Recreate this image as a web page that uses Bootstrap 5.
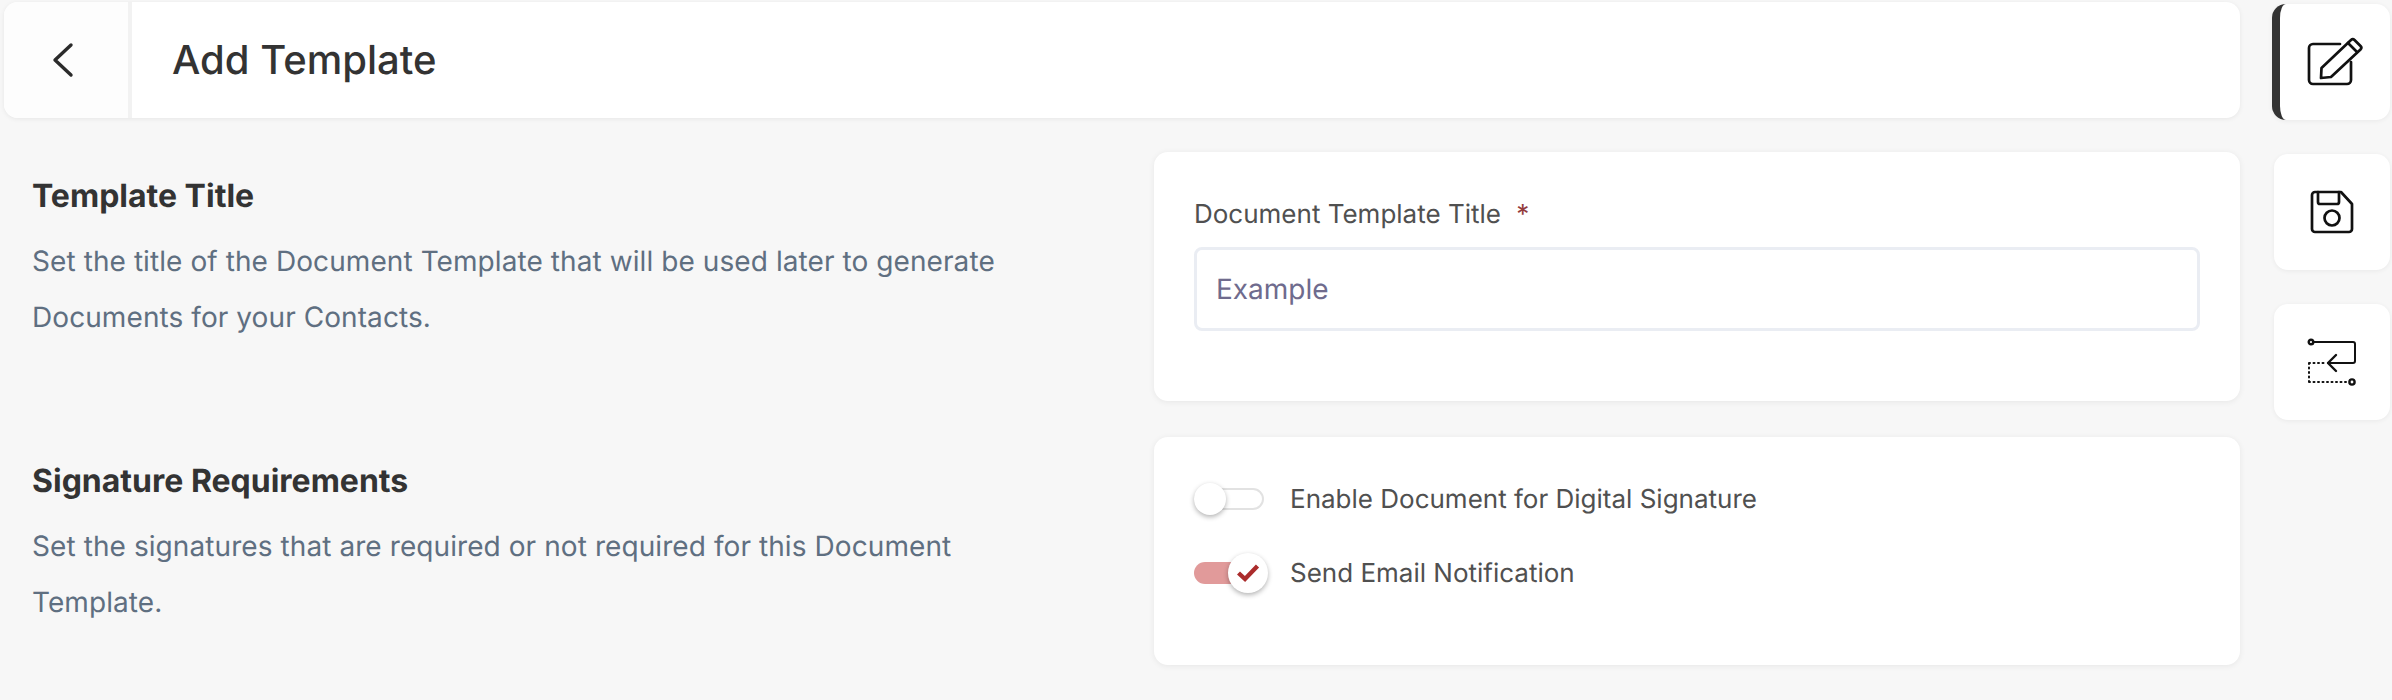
<!doctype html>
<html lang="en">
<head>
<meta charset="utf-8">
<title>Add Template</title>
<link href="https://cdn.jsdelivr.net/npm/bootstrap@5.3.0/dist/css/bootstrap.min.css" rel="stylesheet">
<style>
html,body{height:700px;overflow:hidden}
body{background:#f7f7f7;font-family:Inter,"Liberation Sans",sans-serif;color:#333;text-rendering:geometricPrecision}
.shell{padding:2px 2px 0 4px;gap:34px}
.main-area{width:2236px}
.top-bar{height:116px;background:#fff;border-radius:14px;box-shadow:0 1px 5px rgba(0,0,0,.07);overflow:hidden}
.back-cell{width:124px;background:#fdfdfd;padding-right:7px}
.top-div{width:4px;background:#f2f2f2}
.page-title{font-size:40px;font-weight:500;color:#333;margin:0 0 0 40px;line-height:48px}
.sect{display:grid;grid-template-columns:1150px 1086px}
.sect-one{margin-top:34px;height:249px}
.sect-two{margin-top:36px;height:228px}
.sect-text{padding-left:28px}
.sect-head{font-size:32px;font-weight:700;color:#333;line-height:40px;margin:24px 0 0}
.sect-desc{font-size:28px;letter-spacing:.08px;line-height:56px;color:#5f6f81;margin:17px 0 0;width:1020px}
.panel{background:#fff;border-radius:14px;box-shadow:0 1px 6px rgba(0,0,0,.07);padding:0 40px}
.fld-label{font-size:26px;line-height:30px;color:#505050;margin:48px 0 17px;display:block}
.req{color:#943c3c;margin-left:8px}
.fld-input.form-control{height:84px;border:3px solid #eaedf3;border-radius:8px;font-size:28px;padding:0 19px;color:#6f6b8d;background:#fff;box-shadow:none;text-rendering:geometricPrecision}
.fld-input::placeholder{color:#6f6b8d;opacity:1}
.tog-row{height:74px;gap:26px;font-size:26px;color:#505050}
.tog-first{margin-top:25px}
.tog{position:relative;display:block;width:70px;height:22px;border-radius:11px;flex:none}
.tog-off{border:2px solid #e2e2e2;background:#fff}
.tog-on{background:#e19a9a}
.knob{position:absolute;background:#fff;border-radius:50%;box-shadow:0 2px 5px rgba(0,0,0,.3);display:flex;align-items:center;justify-content:center}
.tog-off .knob{width:32px;height:32px;left:-2px;top:-7px}
.tog-on .knob{width:40px;height:40px;left:34px;top:-9px}
.rail{gap:34px;width:116px}
.rail-btn{width:116px;height:116px;background:#fff;border:0;padding:0;border-radius:14px;box-shadow:0 1px 5px rgba(0,0,0,.06);display:flex;align-items:center;justify-content:center}
.rail-btn:first-child{margin-top:2px}
.rail-active{width:118px;margin-left:-2px;border-left:8px solid #333}
svg{overflow:visible}
</style>
</head>
<body>
<div class="shell d-flex align-items-start">
  <div class="main-area">
    <header class="top-bar d-flex align-items-stretch">
      <div class="back-cell d-flex align-items-center justify-content-center">
        <svg width="20" height="34" viewBox="0 0 20 34" fill="none" stroke="#2b2b2b" stroke-width="3.400" stroke-linecap="round" stroke-linejoin="round"><path d="M18 2 2 17l16 15"/></svg>
      </div>
      <div class="top-div"></div>
      <div class="d-flex align-items-center"><h1 class="page-title">Add Template</h1></div>
    </header>
    <section class="sect sect-one">
      <div class="sect-text">
        <h2 class="sect-head">Template Title</h2>
        <p class="sect-desc">Set the title of the Document Template that will be used later to generate Documents for your Contacts.</p>
      </div>
      <div class="panel">
        <label class="fld-label" for="tpl-title">Document Template Title <span class="req">*</span></label>
        <input id="tpl-title" class="form-control fld-input" type="text" placeholder="Example">
      </div>
    </section>
    <section class="sect sect-two">
      <div class="sect-text">
        <h2 class="sect-head">Signature Requirements</h2>
        <p class="sect-desc">Set the signatures that are required or not required for this Document Template.</p>
      </div>
      <div class="panel">
        <div class="tog-row tog-first d-flex align-items-center"><span class="tog tog-off"><span class="knob"></span></span><span>Enable Document for Digital Signature</span></div>
        <div class="tog-row d-flex align-items-center"><span class="tog tog-on"><span class="knob"><svg width="22" height="18" viewBox="0 0 22 18" fill="none" stroke="#ab2c2c" stroke-width="4.400"><path d="M1.500 9 8 15 20.500 2"/></svg></span></span><span>Send Email Notification</span></div>
      </div>
    </section>
  </div>
  <nav class="rail d-flex flex-column">
    <button class="rail-btn rail-active" aria-label="Edit">
      <svg width="54" height="48" viewBox="0 0 54 48" fill="none" stroke="#111" stroke-width="2.700" stroke-linecap="round" stroke-linejoin="round"><path d="M32 6H5a4 4 0 0 0-4 4v32a4 4 0 0 0 4 4h34a4 4 0 0 0 4-4V24"/><path d="M13 40l.5-10L43 2a2.500 2.500 0 0 1 3.500 0L52.500 8a2.500 2.500 0 0 1 0 3.500L23 39z"/><path d="M40 5l9 9"/></svg>
    </button>
    <button class="rail-btn" aria-label="Save">
      <svg width="42" height="42" viewBox="0 0 42 42" fill="none" stroke="#111" stroke-width="2.700" stroke-linecap="round" stroke-linejoin="round"><path d="M4 1h26l11 12v25a3 3 0 0 1-3 3H4a3 3 0 0 1-3-3V4a3 3 0 0 1 3-3z"/><path d="M7 1v10a2 2 0 0 0 2 2h17a2 2 0 0 0 2-2V1"/><circle cx="21" cy="27" r="7.500"/></svg>
    </button>
    <button class="rail-btn" aria-label="Return">
      <svg width="48" height="46" viewBox="0 0 48 46" fill="none" stroke="#111" stroke-width="2" stroke-linecap="round" stroke-linejoin="round"><circle cx="3" cy="3" r="2.300" stroke-width="2.400"/><path d="M6 3h39a2 2 0 0 1 2 2v17a2 2 0 0 1-2 2H20"/><path d="M28 16l-8 8 8 8" stroke-width="2.400"/><path d="M1 24h16M1 24v19M1 43h39" stroke-dasharray="1 3.500" stroke-width="2"/><circle cx="44" cy="43" r="2.600" stroke-width="2.400"/></svg>
    </button>
  </nav>
</div>
<script src="https://cdn.jsdelivr.net/npm/bootstrap@5.3.0/dist/js/bootstrap.bundle.min.js"></script>
</body>
</html>
